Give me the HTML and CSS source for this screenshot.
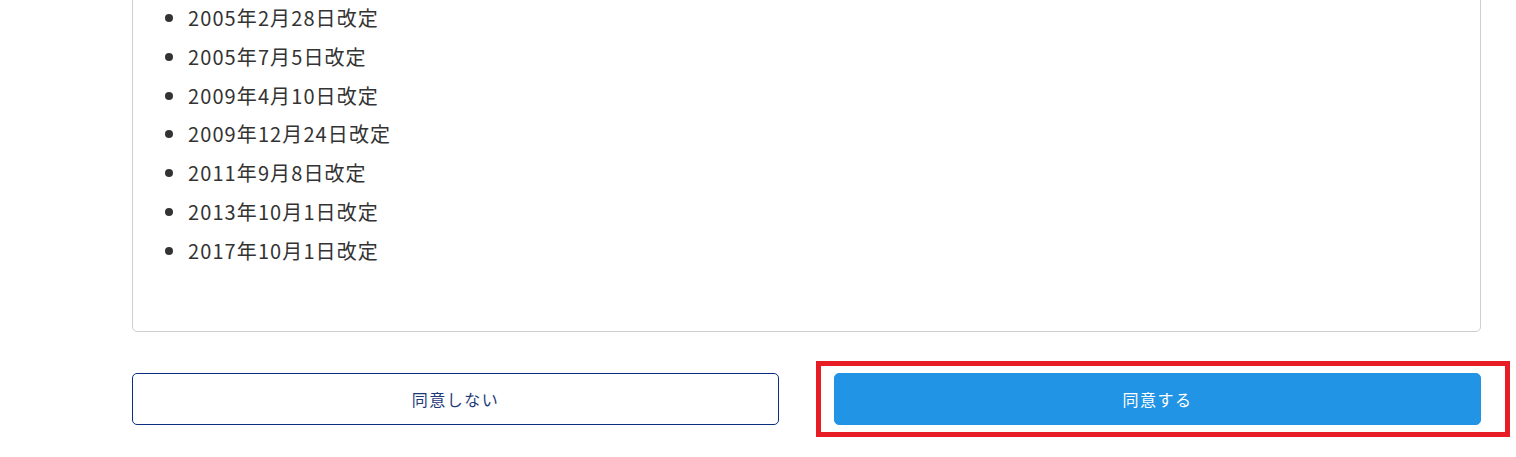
FILE: index.html
```html
<!DOCTYPE html>
<html lang="ja">
<head>
<meta charset="utf-8">
<link rel="stylesheet" href="styles.css">
</head>
<body>
<div class="page">
  <div class="card">
    <ul class="history">
      <li>2005年2月28日改定</li>
      <li>2005年7月5日改定</li>
      <li>2009年4月10日改定</li>
      <li>2009年12月24日改定</li>
      <li>2011年9月8日改定</li>
      <li>2013年10月1日改定</li>
      <li>2017年10月1日改定</li>
    </ul>
  </div>
  <div class="actions">
    <div class="action">
      <button class="btn btn-outline">同意しない</button>
    </div>
    <div class="action">
      <button class="btn btn-primary">同意する</button>
      <span class="highlight"></span>
    </div>
  </div>
</div>
</body>
</html>
```
FILE: styles.css
```css
html, body {
  margin: 0;
  padding: 0;
  background: #fff;
  overflow: hidden;
}
body {
  font-family: "Noto Sans CJK JP", "Noto Sans", sans-serif;
  color: #333;
  height: 457px;
}
.page {
  width: 1349px;
  margin-left: 132px;
}
.card {
  margin-top: -40px;
  border: 1px solid #cfcfcf;
  border-radius: 5px;
  padding: 42px 24px 56px 36px;
}
.history {
  list-style: none;
  margin: 0;
  padding: 0 0 0 19px;
}
.history li {
  position: relative;
  font-size: 20px;
  line-height: 30px;
  height: 30px;
  margin-bottom: 8.8px;
  letter-spacing: 1.1px;
  color: #333;
}
.history li::before {
  content: "";
  position: absolute;
  left: -23px;
  top: 11px;
  width: 8px;
  height: 8px;
  border-radius: 50%;
  background: #333;
}
.actions {
  display: flex;
  gap: 55px;
  margin-top: 41px;
}
.action {
  flex: 1;
  position: relative;
}
.btn {
  display: block;
  width: 100%;
  height: 52px;
  border-radius: 5px;
  font-family: "Noto Sans CJK JP", "Noto Sans", sans-serif;
  font-size: 16px;
  letter-spacing: 1.5px;
  cursor: pointer;
}
.btn-outline {
  background: #fff;
  border: 1px solid #0b2d7c;
  color: #1e3a78;
}
.btn-primary {
  background: #2294e5;
  border: 1px solid #2294e5;
  color: #fff;
}
.highlight {
  position: absolute;
  left: -18px;
  right: -29px;
  top: -12px;
  bottom: -12px;
  border: 5px solid #e81c24;
  pointer-events: none;
}
```
